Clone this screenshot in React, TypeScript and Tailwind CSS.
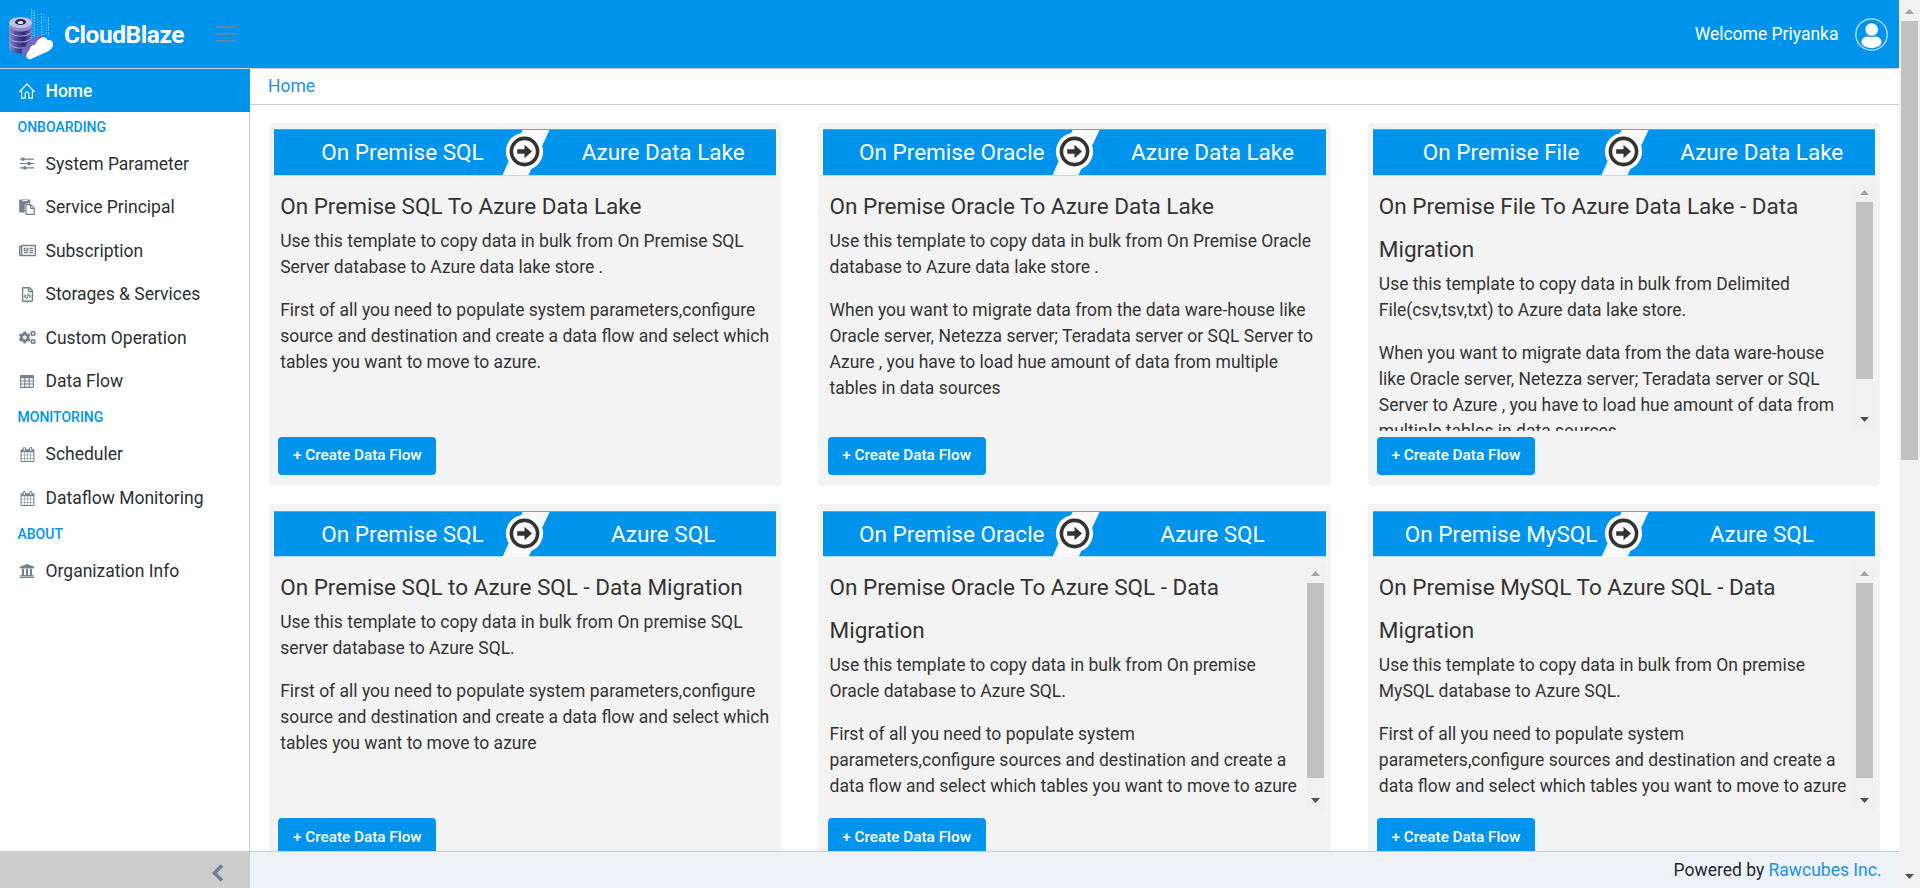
import React from "react";
import { FaCogs, FaRegFileCode, FaRegNewspaper, FaUniversity } from "react-icons/fa";

type Template = {
  from: string;
  to: string;
  title: string;
  paragraphs: string[];
  thumb?: number;
};

const templates: Template[] = [
  {
    from: "On Premise SQL",
    to: "Azure Data Lake",
    title: "On Premise SQL To Azure Data Lake",
    paragraphs: [
      "Use this template to copy data in bulk from On Premise SQL Server database to Azure data lake store .",
      "First of all you need to populate system parameters,configure source and destination and create a data flow and select which tables you want to move to azure.",
    ],
  },
  {
    from: "On Premise Oracle",
    to: "Azure Data Lake",
    title: "On Premise Oracle To Azure Data Lake",
    paragraphs: [
      "Use this template to copy data in bulk from On Premise Oracle database to Azure data lake store .",
      "When you want to migrate data from the data ware-house like Oracle server, Netezza server; Teradata server or SQL Server to Azure , you have to load hue amount of data from multiple tables in data sources",
    ],
  },
  {
    from: "On Premise File",
    to: "Azure Data Lake",
    title: "On Premise File To Azure Data Lake - Data Migration",
    paragraphs: [
      "Use this template to copy data in bulk from Delimited File(csv,tsv,txt) to Azure data lake store.",
      "When you want to migrate data from the data ware-house like Oracle server, Netezza server; Teradata server or SQL Server to Azure , you have to load hue amount of data from multiple tables in data sources",
    ],
    thumb: 177,
  },
  {
    from: "On Premise SQL",
    to: "Azure SQL",
    title: "On Premise SQL to Azure SQL - Data Migration",
    paragraphs: [
      "Use this template to copy data in bulk from On premise SQL server database to Azure SQL.",
      "First of all you need to populate system parameters,configure source and destination and create a data flow and select which tables you want to move to azure",
    ],
  },
  {
    from: "On Premise Oracle",
    to: "Azure SQL",
    title: "On Premise Oracle To Azure SQL - Data Migration",
    paragraphs: [
      "Use this template to copy data in bulk from On premise Oracle database to Azure SQL.",
      "First of all you need to populate system parameters,configure sources and destination and create a data flow and select which tables you want to move to azure",
    ],
    thumb: 195,
  },
  {
    from: "On Premise MySQL",
    to: "Azure SQL",
    title: "On Premise MySQL To Azure SQL - Data Migration",
    paragraphs: [
      "Use this template to copy data in bulk from On premise MySQL database to Azure SQL.",
      "First of all you need to populate system parameters,configure sources and destination and create a data flow and select which tables you want to move to azure",
    ],
    thumb: 195,
  },
];

function SlidersIcon() {
  return (
    <svg width="14" height="13" viewBox="0 0 14 13" fill="currentColor">
      <path d="M0 1.5h14v1.2H0zM0 5.9h14v1.2H0zM0 10.3h14v1.2H0z" />
      <path d="M1.6.4h3v3.4h-3zM7.6 4.8h3v3.4h-3zM3.4 9.2h3v3.4h-3z" />
    </svg>
  );
}

function PasteIcon() {
  return (
    <svg width="16" height="16" viewBox="0 0 16 16">
      <path d="M1 .6h9.400a.8.8 0 0 1 .8.8v3.200H7.400a1.600 1.600 0 0 0-1.600 1.600V13.600H1a.8.8 0 0 1-.8-.8V1.400A.8.8 0 0 1 1 .6z" fill="currentColor" />
      <path d="M3 1.700h5.600" stroke="#fff" strokeWidth="1" />
      <path d="M7 5.600h4.800l3.500 3.500v6.200H7z" fill="#fff" stroke="currentColor" strokeWidth="1.200" strokeLinejoin="round" />
      <path d="M11.600 5.800v3.500h3.500" fill="none" stroke="currentColor" strokeWidth="1.200" />
    </svg>
  );
}

function TableIcon() {
  return (
    <svg width="14" height="13" viewBox="0 0 14 13">
      <rect x="0" y="0" width="14" height="13" rx="1.200" fill="currentColor" />
      <path
        d="M1.100 3.200h3.200v2.200H1.100zM5.400 3.200h3.200v2.200H5.400zM9.700 3.200h3.200v2.200H9.700zM1.100 6.400h3.200v2.200H1.100zM5.400 6.400h3.200v2.200H5.400zM9.700 6.400h3.200v2.200H9.700zM1.100 9.600h3.200v2.200H1.100zM5.400 9.600h3.200v2.200H5.400zM9.700 9.600h3.200v2.200H9.700z"
        fill="#fff"
      />
    </svg>
  );
}

function CalendarIcon() {
  return (
    <svg width="15" height="15" viewBox="0 0 1792 1792" fill="currentColor">
      <path d="M192 1664h288v-288h-288v288zm352 0h320v-288h-320v288zm-352-352h288v-320h-288v320zm352 0h320v-320h-320v320zm-352-384h288v-288h-288v288zm736 736h320v-288h-320v288zm-384-736h320v-288h-320v288zm768 736h288v-288h-288v288zm-384-352h320v-320h-320v320zm-352-864v-288q0-13-9.500-22.500t-22.500-9.500h-64q-13 0-22.500 9.500t-9.500 22.500v288q0 13 9.500 22.500t22.500 9.500h64q13 0 22.500-9.500t9.500-22.500zm736 864h288v-320h-288v320zm-384-384h320v-288h-320v288zm384 0h288v-288h-288v288zm32-480v-288q0-13-9.500-22.500t-22.500-9.500h-64q-13 0-22.500 9.500t-9.500 22.500v288q0 13 9.500 22.500t22.500 9.500h64q13 0 22.500-9.500t9.500-22.500zm384-64v1280q0 52-38 90t-90 38h-1408q-52 0-90-38t-38-90v-1280q0-52 38-90t90-38h128v-96q0-66 47-113t113-47h64q66 0 113 47t47 113v96h384v-96q0-66 47-113t113-47h64q66 0 113 47t47 113v96h128q52 0 90 38t38 90z" />
    </svg>
  );
}

function HomeIcon() {
  return (
    <svg width="16" height="16" viewBox="0 0 16 16" fill="none" stroke="#fff" strokeWidth="1.200" strokeLinejoin="round">
      <path d="M.6 8.600 8 1l7.400 7.600" strokeLinecap="round" />
      <path d="M2.600 7v8.200h3.600v-4.400a1.800 1.800 0 0 1 3.600 0v4.400h3.600V7" />
    </svg>
  );
}

const sections = [
  {
    title: "ONBOARDING",
    items: [
      { label: "System Parameter", icon: <SlidersIcon /> },
      { label: "Service Principal", icon: <PasteIcon /> },
      { label: "Subscription", icon: <FaRegNewspaper size={17} /> },
      { label: "Storages & Services", icon: <FaRegFileCode size={15} /> },
      { label: "Custom Operation", icon: <FaCogs size={17} /> },
      { label: "Data Flow", icon: <TableIcon /> },
    ],
  },
  {
    title: "MONITORING",
    items: [
      { label: "Scheduler", icon: <CalendarIcon /> },
      { label: "Dataflow Monitoring", icon: <CalendarIcon /> },
    ],
  },
  { title: "ABOUT", items: [{ label: "Organization Info", icon: <FaUniversity size={16} /> }] },
];

function LogoMark() {
  return (
    <svg width="46" height="52" viewBox="0 0 46 52">
      <defs>
        <linearGradient id="disk" x1="0" x2="1">
          <stop offset="0" stopColor="#8c8cd0" />
          <stop offset=".3" stopColor="#54509c" />
          <stop offset=".65" stopColor="#2c2a6c" />
          <stop offset="1" stopColor="#7c78c0" />
        </linearGradient>
      </defs>
      <g stroke="#6fc4fa" strokeWidth="1" strokeDasharray="2 1">
        <path d="M23.500 1v28M26.500 3v28M33.500 5v25M40.500 9v19" />
      </g>
      <g stroke="#45b3f7" strokeWidth="1.500" strokeDasharray="1 1.500">
        <path d="M25 2v28M29.500 6v24M35.500 6v22M38.500 9v18" />
      </g>
      {[35, 29, 23, 17].map((y) => (
        <g key={y}>
          <path d={`M1 ${y}v4.500c0 3.500 5 6 11.500 6S24 ${y + 8} 24 ${y + 4.5}v-4.500z`} fill="url(#disk)" />
          <ellipse cx="12.500" cy={y} rx="11.500" ry="5.500" fill="#a9a6dc" />
        </g>
      ))}
      <path d="M1 14.500v3c0 3.500 5 6 11.500 6S24 21 24 17.500v-3z" fill="#8f8ccc" />
      <ellipse cx="12.500" cy="14.500" rx="11.500" ry="5.500" fill="#c3c0e8" />
      <ellipse cx="12.500" cy="14" rx="5.500" ry="3" fill="#23215c" />
      <ellipse cx="12.500" cy="14.500" rx="2.800" ry="1.500" fill="#f0f0ff" />
      <path d="M20 50c-4-1-6.500-4-6.500-7 .3-3 2.500-4.500 4.500-4.500 0-3 2.500-4.500 5-4.500 1-4 5-7 8.500-7 3 0 5 1.500 6 3z" fill="#6d6bc4" />
      <path d="M19.500 50.500c-2-1.500-1-6 2-8.500.5-3.500 3-5.500 5.500-5 1.500-4.500 6.500-9 10-7.500 1.500.5 2.300 1.500 2.300 3 3-1.500 5.700.5 5.700 3.500 0 4-3 6.500-6.500 8l-15.500 7c-1.500.6-2.800.2-3.500-.5z" fill="#fff" />
    </svg>
  );
}

function ScrollBar({ thumb, className }: { thumb: number; className: string }) {
  return (
    <div className={"flex w-[21px] shrink-0 flex-col items-center bg-[#f1f1f1] " + className}>
      <svg width="21" height="21" viewBox="0 0 21 21" className="shrink-0">
        <path d="M6 14l4.500-5 4.500 5z" fill="#a3a3a3" />
      </svg>
      <div className="w-[17px] shrink-0 bg-[#c1c1c1]" style={{ height: thumb }} />
      <div className="grow" />
      <svg width="21" height="21" viewBox="0 0 21 21" className="shrink-0">
        <path d="M6 7l4.500 5 4.500-5z" fill="#505050" />
      </svg>
    </div>
  );
}

function Banner({ from, to }: { from: string; to: string }) {
  return (
    <div className="relative flex h-[46.500px] items-center border-y border-t-[#4fa9e2] border-b-[#b5ddf5] bg-[#0094ed] text-[22.500px] leading-none text-white">
      <span className="w-[257px] text-center">{from}</span>
      <span className="ml-[19px] grow text-center">{to}</span>
      <svg className="absolute -top-px left-[228.300px]" width="48" height="47" viewBox="0 0 48 47">
        <path d="M20.500 1H47.500L26.500 46H.5z" fill="#f9f9f9" />
        <circle cx="22.500" cy="22.500" r="18.600" fill="#fff" />
        <circle cx="22.500" cy="22.500" r="13.100" fill="#fff" stroke="#333" strokeWidth="3.600" />
        <path d="M15.200 20.200h7.300v-4.400l7.500 6.700-7.500 6.700v-4.400h-7.300z" fill="#333" />
      </svg>
    </div>
  );
}

function TemplateCard({ t }: { t: Template }) {
  return (
    <article className="flex h-[363px] flex-col rounded-[4px] bg-[#f3f3f3] px-[5px] pt-[6.200px]">
      <Banner from={t.from} to={t.to} />
      <div className="mt-[4.900px] flex h-[250px] overflow-hidden">
        <div className="grow overflow-hidden pt-[4.400px] pr-[5px] pl-[6.200px] text-[#333]">
          <h2 className="text-[22.500px] leading-[43px]">{t.title}</h2>
          {t.paragraphs.map((p) => (
            <p key={p} className="mb-[17px] text-[17.500px] leading-[26px]">
              {p}
            </p>
          ))}
        </div>
        {t.thumb ? <ScrollBar thumb={t.thumb} className="h-full" /> : null}
      </div>
      <button className="mt-[6.100px] ml-[4.300px] h-[38px] w-[158px] rounded-[4px] bg-[#0094ed] text-[15.300px] font-medium text-white">
        + Create Data Flow
      </button>
    </article>
  );
}

export default function App() {
  return (
    <div className="flex h-[888px] w-[1920px] overflow-hidden bg-white font-['Roboto',sans-serif] text-[17.500px] text-[#2b2f33]">
      <div className="flex w-[1899px] flex-col">
        <header className="flex h-[69px] shrink-0 items-center border-b border-[#c8ced3] bg-[#0094ed] text-white">
          <div className="ml-2 h-[52px] w-[46px]">
            <LogoMark />
          </div>
          <span className="ml-[10px] w-[151px] pt-[3px] text-[24.500px] leading-none font-bold tracking-[-0.450px]">CloudBlaze</span>
          <svg width="21" height="16" viewBox="0 0 21 16" stroke="#5f87a5" strokeWidth="2" strokeLinecap="round">
            <path d="M1 1h19M1 8h19M1 15h19" />
          </svg>
          <span className="ml-auto">Welcome Priyanka</span>
          <svg className="mr-[11.500px] ml-[16px]" width="33" height="33" viewBox="0 0 33 33">
            <circle cx="16.500" cy="16.500" r="15.700" fill="none" stroke="#cfeafc" strokeWidth="1.200" />
            <circle cx="16.700" cy="11.500" r="6.300" fill="#fff" />
            <path d="M6.500 24c0-4 4-5.500 6-5.500 1.500.8 6.500.8 8 0 2 0 6 1.500 6 5.500 0 3.500-4.500 6-10 6s-10-2.500-10-6z" fill="#fff" />
          </svg>
        </header>

        <div className="flex min-h-0 grow">
          <aside className="flex w-[250px] shrink-0 flex-col">
            <nav className="grow border-r border-[#c8ced3]">
              <a className="-mr-px mb-[0.300px] flex h-[43px] items-center bg-[#0094ed] pt-px pl-[18px] font-medium text-white">
                <span className="mr-[9.500px] flex w-[18px] justify-center">
                  <HomeIcon />
                </span>
                Home
              </a>
              {sections.map((s) => (
                <div key={s.title}>
                  <h3 className="flex h-[29.750px] items-center pl-[17.500px] text-[14px] font-medium text-[#0094ed]">{s.title}</h3>
                  {s.items.map((item) => (
                    <a key={item.label} className="flex h-[43.500px] items-center pl-[18px]">
                      <span className="mr-[9.500px] flex w-[18px] justify-center text-[#73818f]">{item.icon}</span>
                      {item.label}
                    </a>
                  ))}
                </div>
              ))}
            </nav>
            <div className="flex h-[37px] items-center justify-end bg-[#ccc] pr-[26px]">
              <svg width="12" height="18" viewBox="0 0 12 18" className="mt-1.5">
                <path d="M10 1.500L2.500 9l7.500 7.500" fill="none" stroke="#73818f" strokeWidth="3.600" />
              </svg>
            </div>
          </aside>

          <div className="flex min-w-0 grow flex-col">
            <div className="flex h-9 shrink-0 items-center border-b border-[#c8ced3] pl-[18px] text-[#2090e8]">Home</div>
            <main className="grid min-h-0 grow grid-cols-3 content-start gap-x-[37px] gap-y-[18.400px] overflow-hidden px-[19px] pt-[18px]">
              {templates.map((t) => (
                <TemplateCard key={t.title} t={t} />
              ))}
            </main>
            <footer className="flex h-[37px] shrink-0 items-center justify-end border-t border-[#c8ced3] bg-[#eef2f6] pr-[17.500px] text-[#23282c]">
              Powered by&nbsp;<a className="text-[#2090e8]">Rawcubes Inc.</a>
            </footer>
          </div>
        </div>
      </div>
      <ScrollBar thumb={439} className="h-[888px]" />
    </div>
  );
}
